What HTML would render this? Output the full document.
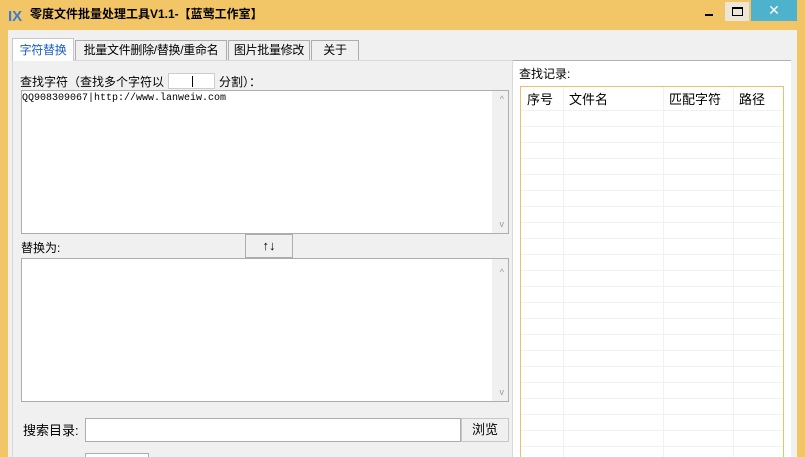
<!DOCTYPE html>
<html><head><meta charset="utf-8"><style>
*{margin:0;padding:0;box-sizing:border-box}
html,body{width:805px;height:457px;overflow:hidden}
body{background:#f2c666;font-family:"Liberation Sans","Noto Sans CJK SC",sans-serif;font-size:12px;line-height:14px;color:#000;position:relative;white-space:nowrap}
.a{position:absolute}
.title{left:30px;top:7px;font-weight:bold;font-size:12px;color:#000}
.client{left:8px;top:30px;width:789px;height:427px;background:#f0f0f0}
.tab{top:40px;height:20px;border:1px solid #adadad;border-bottom:none;background:#f0f0f0;font-size:12px;line-height:18px;text-align:center;letter-spacing:-0.3px}
.box{background:#fff;border:1px solid #abadb3;overflow:hidden}
.sb{position:absolute;right:0;top:0;bottom:0;width:16px;background:#f0f0f0}
.row{position:absolute;left:0;right:0;height:1px;background:#f0f0f0}
.col{position:absolute;top:0;bottom:0;width:1px;background:#f0f0f0}
</style></head><body>
<svg class="a" style="left:8px;top:7px" width="16" height="16"><text x="0" y="14" font-family="Liberation Sans" font-weight="bold" font-size="15" fill="#3a7bd5">IX</text></svg>
<div class="a title">零度文件批量处理工具V1.1-【蓝莺工作室】</div>
<div class="a" style="left:705px;top:14px;width:8px;height:2px;background:#000"></div>
<div class="a" style="left:725px;top:2px;width:24px;height:19px;background:#ece6d8"></div>
<div class="a" style="left:732px;top:7px;width:11px;height:9px;border:1px solid #000;border-top-width:2px"></div>
<div class="a" style="left:751px;top:0;width:46px;height:21px;background:#4fb2cc;color:#fff;text-align:center;font-size:14px;line-height:20px">✕</div>
<div class="a client"></div>
<div class="a" style="left:512px;top:60px;width:279px;height:397px;background:#fff;border-top:1px solid #aab3bc"></div>
<div class="a" style="left:12px;top:60px;width:501px;height:397px;border:1px solid #d8d8d8;border-bottom:none;background:#f0f0f0"></div>
<div class="a tab" style="left:12px;top:38px;width:62px;height:23px;background:#fff;color:#1a5cc8;border-color:#c8c8c8;line-height:22px">字符替换</div>
<div class="a tab" style="left:75px;width:152px">批量文件删除/替换/重命名</div>
<div class="a tab" style="left:228px;width:82px">图片批量修改</div>
<div class="a tab" style="left:311px;width:48px">关于</div>
<div class="a" style="left:20px;top:75px">查找字符（查找多个字符以</div>
<div class="a box" style="left:168px;top:73px;width:47px;height:16px;border-color:#ccc"><div class="a" style="left:23px;top:2px;width:1px;height:11px;background:#000"></div></div>
<div class="a" style="left:219px;top:75px">分割）：</div>
<div class="a box" style="left:21px;top:90px;width:488px;height:144px"><div class="sb"></div>
<div class="a" style="left:0;top:2px;font-family:'Liberation Mono',monospace;font-size:10px;line-height:12px">QQ908309067|http://www.lanweiw.com</div>
<div class="a" style="right:4px;top:1px;color:#999;font-size:9px">^</div><div class="a" style="right:4px;bottom:2px;color:#999;font-size:9px">v</div></div>
<div class="a" style="left:21px;top:241px">替换为:</div>
<div class="a" style="left:245px;top:234px;width:48px;height:24px;border:1px solid #adadad;background:#f0f0f0;text-align:center;line-height:22px;font-size:13px">↑↓</div>
<div class="a box" style="left:21px;top:258px;width:488px;height:144px"><div class="sb"></div>
<div class="a" style="right:4px;top:6px;color:#999;font-size:9px">^</div><div class="a" style="right:4px;bottom:2px;color:#999;font-size:9px">v</div></div>
<div class="a" style="left:23px;top:423px;font-size:13px;line-height:15px">搜索目录:</div>
<div class="a box" style="left:85px;top:418px;width:376px;height:24px"></div>
<div class="a" style="left:461px;top:418px;width:48px;height:24px;border:1px solid #c8c8c8;background:#f0f0f0;text-align:center;line-height:22px;font-size:13px">浏览</div>
<div class="a box" style="left:85px;top:453px;width:64px;height:10px"></div>
<div class="a" style="left:519px;top:67px">查找记录:</div>
<div class="a" style="left:520px;top:86px;width:264px;height:380px;border:1px solid #e8c070;background:#fff">
<div class="col" style="left:42px"></div><div class="col" style="left:142px"></div><div class="col" style="left:212px"></div>
<div class="a" style="left:6px;top:6px;font-size:13px">序号</div>
<div class="a" style="left:48px;top:6px;font-size:13px">文件名</div>
<div class="a" style="left:148px;top:6px;font-size:13px">匹配字符</div>
<div class="a" style="left:218px;top:6px;font-size:13px">路径</div>
<div class="row" style="top:23px"></div><div class="row" style="top:39px"></div><div class="row" style="top:55px"></div><div class="row" style="top:71px"></div><div class="row" style="top:87px"></div><div class="row" style="top:103px"></div><div class="row" style="top:119px"></div><div class="row" style="top:135px"></div><div class="row" style="top:151px"></div><div class="row" style="top:167px"></div><div class="row" style="top:183px"></div><div class="row" style="top:199px"></div><div class="row" style="top:215px"></div><div class="row" style="top:231px"></div><div class="row" style="top:247px"></div><div class="row" style="top:263px"></div><div class="row" style="top:279px"></div><div class="row" style="top:295px"></div><div class="row" style="top:311px"></div><div class="row" style="top:327px"></div><div class="row" style="top:343px"></div><div class="row" style="top:359px"></div>
</div>
</body></html>
